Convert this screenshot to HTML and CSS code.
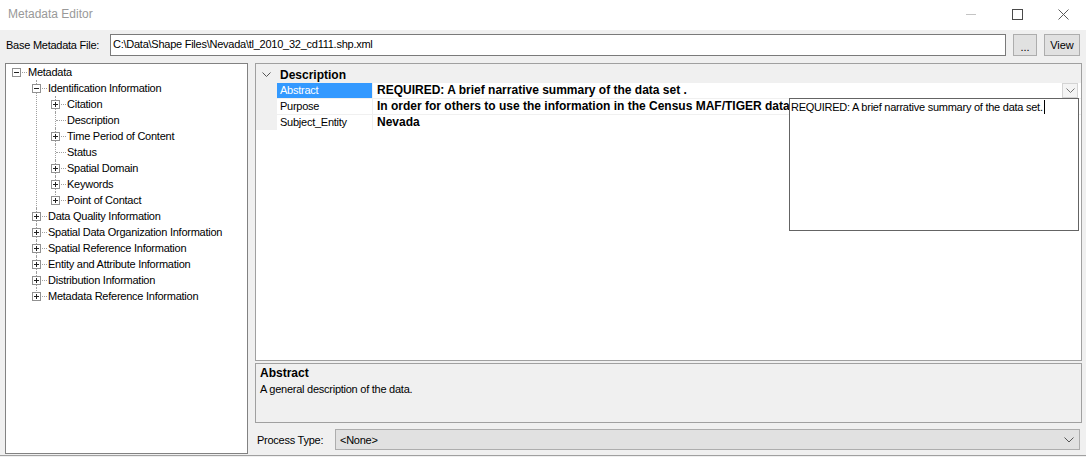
FILE: index.html
```html
<!DOCTYPE html>
<html lang="en">
<head>
    <meta charset="UTF-8">
    <title>Metadata Editor</title>
    <link rel="stylesheet" href="styles.css">
</head>
<body>
    <div class="titlebar">
        <span class="title">Metadata Editor</span>
        <div class="controls">
            <span class="ctl"><svg width="10" height="10" viewBox="0 0 10 10"><line x1="0" y1="5.5" x2="10" y2="5.5" stroke="#c4c4c4"/></svg></span>
            <span class="ctl"><svg width="11" height="11" viewBox="0 0 11 11"><rect x="0.5" y="0.5" width="10" height="10" fill="none" stroke="#4a4a4a"/></svg></span>
            <span class="ctl"><svg width="11" height="11" viewBox="0 0 11 11"><path d="M0.5 0.5 L10.5 10.5 M10.5 0.5 L0.5 10.5" stroke="#5a5a5a" fill="none"/></svg></span>
        </div>
    </div>

    <div class="filebar">
        <label class="file-label">Base Metadata File:</label>
        <div class="textbox">C:\Data\Shape Files\Nevada\tl_2010_32_cd111.shp.xml</div>
        <button class="btn btn-browse">...</button>
        <button class="btn btn-view">View</button>
    </div>

    <div class="main">
        <div class="tree">
            <ul class="tree-root">
                <li>
                    <div class="node"><span class="box minus"></span><span class="label">Metadata</span></div>
                    <ul>
                        <li>
                            <div class="node"><span class="box minus"></span><span class="label">Identification Information</span></div>
                            <ul class="sub">
                                <li><div class="node"><span class="box plus"></span><span class="label">Citation</span></div></li>
                                <li><div class="node"><span class="leaf"></span><span class="label">Description</span></div></li>
                                <li><div class="node"><span class="box plus"></span><span class="label">Time Period of Content</span></div></li>
                                <li><div class="node"><span class="leaf"></span><span class="label">Status</span></div></li>
                                <li><div class="node"><span class="box plus"></span><span class="label">Spatial Domain</span></div></li>
                                <li><div class="node"><span class="box plus"></span><span class="label">Keywords</span></div></li>
                                <li><div class="node"><span class="box plus"></span><span class="label">Point of Contact</span></div></li>
                            </ul>
                        </li>
                        <li><div class="node"><span class="box plus"></span><span class="label">Data Quality Information</span></div></li>
                        <li><div class="node"><span class="box plus"></span><span class="label">Spatial Data Organization Information</span></div></li>
                        <li><div class="node"><span class="box plus"></span><span class="label">Spatial Reference Information</span></div></li>
                        <li><div class="node"><span class="box plus"></span><span class="label">Entity and Attribute Information</span></div></li>
                        <li><div class="node"><span class="box plus"></span><span class="label">Distribution Information</span></div></li>
                        <li><div class="node"><span class="box plus"></span><span class="label">Metadata Reference Information</span></div></li>
                    </ul>
                </li>
            </ul>
        </div>

        <div class="right">
            <div class="propgrid">
                <div class="pg-body">
                    <div class="pg-cat">
                        <svg class="chev" width="9" height="6" viewBox="0 0 9 6"><path d="M0.5 0.5 L4.5 4.5 L8.5 0.5" stroke="#555" fill="none"/></svg>
                        <span>Description</span>
                    </div>
                    <div class="pg-row selected">
                        <div class="pg-label">Abstract</div>
                        <div class="pg-value">
                            <span class="pg-text">REQUIRED: A brief narrative summary of the data set .</span>
                            <span class="dd-btn"><svg width="9" height="5" viewBox="0 0 9 5"><path d="M0.5 0.5 L4.5 4.5 L8.5 0.5" stroke="#777" fill="none"/></svg></span>
                        </div>
                    </div>
                    <div class="pg-row">
                        <div class="pg-label">Purpose</div>
                        <div class="pg-value"><span class="pg-text">In order for others to use the information in the Census MAF/TIGER data</span></div>
                    </div>
                    <div class="pg-row">
                        <div class="pg-label">Subject_Entity</div>
                        <div class="pg-value"><span class="pg-text">Nevada</span></div>
                    </div>
                </div>
                <div class="pg-popup">REQUIRED: A brief narrative summary of the data set.<span class="caret"></span></div>
            </div>

            <div class="help">
                <div class="help-title">Abstract</div>
                <div class="help-text">A general description of the data.</div>
            </div>

            <div class="process">
                <span class="process-label">Process Type:</span>
                <div class="combo">
                    <span>&lt;None&gt;</span>
                    <svg width="10" height="6" viewBox="0 0 10 6"><path d="M0.5 0.5 L5 5 L9.5 0.5" stroke="#555" fill="none"/></svg>
                </div>
            </div>
        </div>
    </div>
    <div class="statusline"></div>
</body>
</html>
```

FILE: styles.css
```css
body {
    margin: 0;
    width: 1086px;
    height: 457px;
    overflow: hidden;
    background: #f0f0f0;
    font-family: "Liberation Sans", Arial, sans-serif;
    font-size: 11px;
    letter-spacing: -0.25px;
    color: #000;
}

/* title bar */
.titlebar {
    height: 30px;
    background: #fff;
    display: flex;
    align-items: center;
}

.title {
    flex: 1;
    padding-left: 8px;
    margin-bottom: 2px;
    font-size: 12px;
    letter-spacing: 0;
    color: #999;
}

.controls {
    display: flex;
    align-self: stretch;
}

.ctl {
    width: 46px;
    display: flex;
    align-items: center;
    justify-content: center;
    padding-bottom: 2px;
}

/* file row */
.filebar {
    display: flex;
    align-items: center;
    height: 22px;
    padding: 4px 6px 0 6px;
}

.file-label {
    width: 104px;
}

.textbox {
    flex: 1;
    height: 22px;
    box-sizing: border-box;
    border: 1px solid #7a7a7a;
    background: #fff;
    padding: 0 2px;
    line-height: 19px;
}

.btn {
    height: 22px;
    margin-left: 7px;
    padding: 0;
    border: 1px solid #adadad;
    background: #e1e1e1;
    font: inherit;
    color: #000;
}

.btn-browse {
    width: 24px;
    padding-top: 4px;
}

.btn-view {
    width: 36px;
}

/* main area */
.main {
    display: flex;
    gap: 7px;
    height: 391px;
    margin-top: 7px;
    padding: 0 4px 0 5px;
}

.tree {
    width: 243px;
    box-sizing: border-box;
    border: 1px solid #828282;
    background: #fff;
}

.tree ul {
    list-style: none;
    margin: 0;
    padding: 0 0 0 20px;
}

.tree .tree-root {
    padding-left: 6px;
}

.tree ul.sub {
    padding-left: 19px;
}

.tree li {
    position: relative;
}

.tree ul ul > li::before {
    content: "";
    position: absolute;
    left: 4px;
    top: 0;
    bottom: 0;
    border-left: 1px dotted #a0a0a0;
}

.tree ul ul > li:last-child::before {
    bottom: auto;
    height: 9px;
}

.tree li::after {
    content: "";
    position: absolute;
    left: 5px;
    top: 8px;
    width: 10px;
    border-top: 1px dotted #a0a0a0;
}

.node {
    display: flex;
    height: 16px;
    line-height: 16px;
}

.box {
    position: relative;
    z-index: 1;
    width: 9px;
    height: 9px;
    margin-top: 4px;
    box-sizing: border-box;
    border: 1px solid #919191;
    background: #fff;
}

.box::before {
    content: "";
    position: absolute;
    left: 1px;
    top: 3px;
    width: 5px;
    height: 1px;
    background: #222;
}

.box.plus::after {
    content: "";
    position: absolute;
    left: 3px;
    top: 1px;
    width: 1px;
    height: 5px;
    background: #222;
}

.leaf {
    width: 9px;
}

.label {
    padding-left: 7px;
    white-space: nowrap;
}

/* right column */
.right {
    flex: 1;
    display: flex;
    flex-direction: column;
}

.propgrid {
    position: relative;
    height: 298px;
    box-sizing: border-box;
    border: 1px solid #a0a0a0;
    background: #fff;
}

.pg-body {
    background: #f0f0f0;
    padding-top: 3px;
}

.pg-cat {
    display: flex;
    align-items: center;
    height: 16px;
    padding-left: 6px;
    font-size: 12px;
    font-weight: bold;
    letter-spacing: 0;
}

.chev {
    margin-right: 9px;
}

.pg-row {
    display: flex;
    height: 15px;
    margin-left: 21px;
    margin-bottom: 1px;
    line-height: 15px;
}

.pg-label {
    width: 92px;
    padding-left: 3px;
    margin-right: 1px;
    background: #fff;
    white-space: nowrap;
}

.pg-row.selected .pg-label {
    background: #3399ff;
    color: #fff;
}

.pg-value {
    flex: 1;
    display: flex;
    min-width: 0;
    background: #fff;
    padding-left: 4px;
    font-size: 12px;
    font-weight: bold;
    letter-spacing: 0;
}

.pg-text {
    flex: 1;
    overflow: hidden;
    white-space: nowrap;
}

.dd-btn {
    width: 16px;
    height: 15px;
    margin-right: 3px;
    box-sizing: border-box;
    border: 1px solid #d4d4d4;
    background: #f4f4f4;
    display: flex;
    align-items: center;
    justify-content: center;
}

.pg-popup {
    position: absolute;
    top: 34px;
    right: 2px;
    width: 290px;
    height: 133px;
    box-sizing: border-box;
    border: 1px solid #646464;
    background: #fff;
    padding-left: 1px;
    line-height: 16px;
    white-space: nowrap;
}

.caret {
    display: inline-block;
    width: 1px;
    height: 14px;
    margin-left: 1px;
    background: #000;
    vertical-align: -3px;
}

.help {
    height: 60px;
    margin-top: 2px;
    box-sizing: border-box;
    border: 1px solid #a0a0a0;
    padding: 1px 4px;
    line-height: 16px;
}

.help-title {
    font-size: 12px;
    font-weight: bold;
    letter-spacing: 0;
}

.process {
    display: flex;
    align-items: center;
    height: 21px;
    margin-top: 6px;
    padding: 0 2px;
}

.process-label {
    width: 78px;
}

.combo {
    flex: 1;
    height: 21px;
    box-sizing: border-box;
    display: flex;
    align-items: center;
    justify-content: space-between;
    border: 1px solid #adadad;
    background: #e1e1e1;
    padding: 0 5px 0 4px;
}

.statusline {
    margin-top: 1px;
    border-top: 1px solid #a0a0a0;
}
```
